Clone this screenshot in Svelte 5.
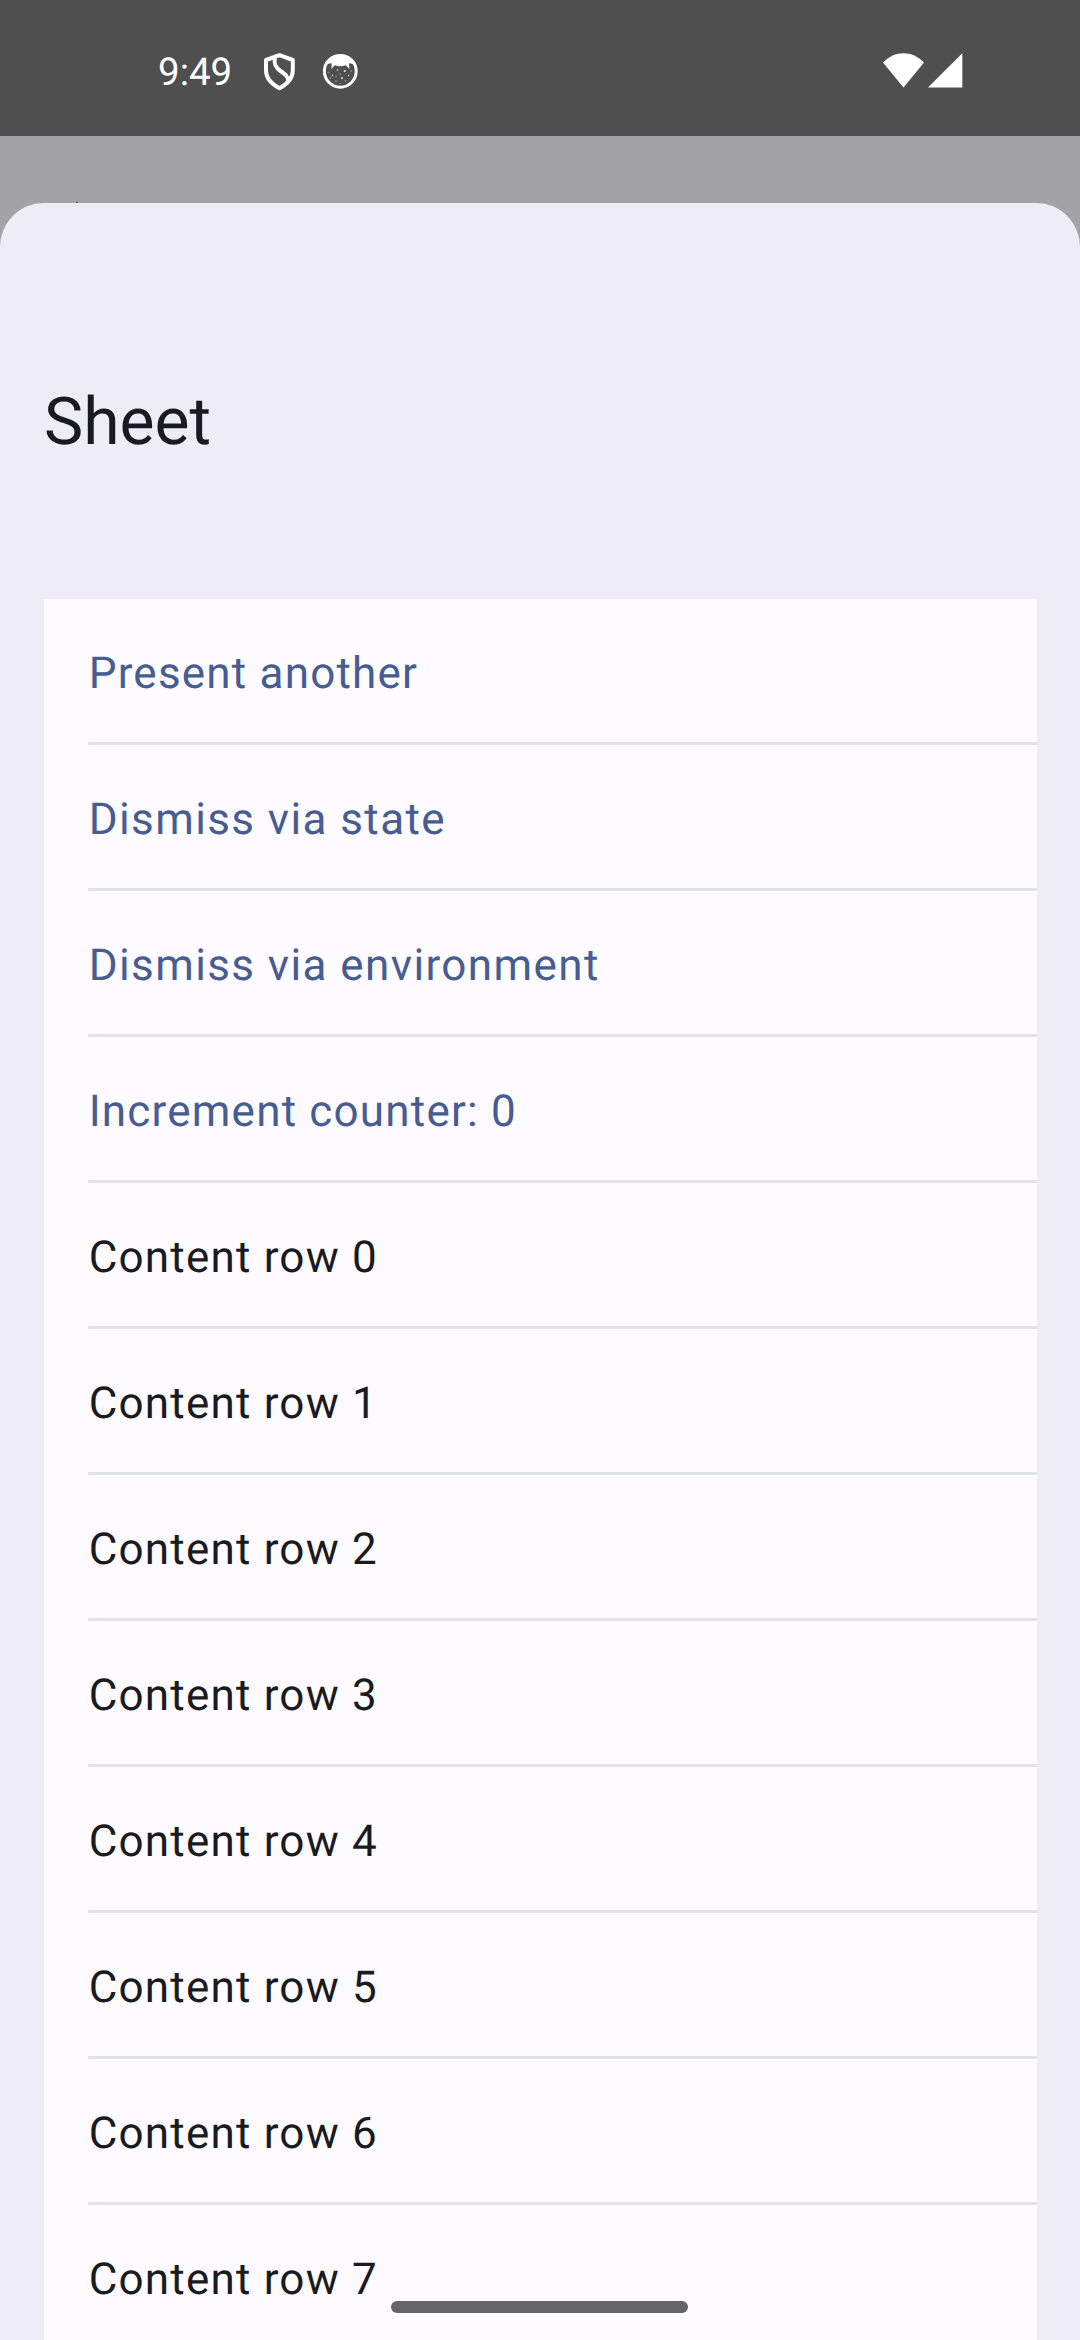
<script>
  const actions = [
    { label: 'Present another', wide: false },
    { label: 'Dismiss via state', wide: true },
    { label: 'Dismiss via environment', wide: true },
    { label: 'Increment counter: 0', wide: false },
  ];
  const rows = Array.from({ length: 8 }, (_, i) => `Content row ${i}`);
</script>

<div class="screen">
  <header class="status">
    <div class="left">
      <span class="time">9:49</span>
      <svg class="shield" width="32" height="38" viewBox="0 0 32 38" fill="none" stroke="#fff" stroke-width="4" stroke-linejoin="round">
        <path d="M15.500 2.200 28.800 7V17.500C28.800 25.500 22.500 31.500 15.500 35.300 8.500 31.500 2 25.500 2 17.500V7Z" />
        <path d="M10.800 4.500C9.800 11 11.500 14.500 16.500 18 21.500 21.500 24.300 23.500 24.300 28.500" />
      </svg>
      <svg class="cat" width="36" height="36" viewBox="0 0 36 36">
        <circle cx="18.300" cy="18.300" r="15.900" fill="none" stroke="#fff" stroke-width="3" />
        <path d="M5 11 8 6.500C13 1 23.500 1 28.500 6.500L31.600 11 27 10.300 27.400 16 23.800 12.200Q18.300 14.500 12.800 12.200L9.400 16 9.700 10.300Z" fill="#fff" />
        <g fill="#fff" opacity=".85">
          <circle cx="15.500" cy="17" r=".8" /><circle cx="22.800" cy="18" r="1.100" />
          <circle cx="10.500" cy="22.500" r=".8" /><circle cx="20" cy="25" r="1" />
          <circle cx="26.500" cy="22.500" r=".7" />
        </g>
        <g fill="#fff" opacity=".35">
          <circle cx="6.500" cy="19.500" r=".9" /><circle cx="8.500" cy="25" r=".9" />
          <circle cx="14" cy="28" r=".9" /><circle cx="18" cy="21" r=".9" />
          <circle cx="23.500" cy="28" r=".9" /><circle cx="29" cy="18" r=".9" />
          <circle cx="14" cy="23.500" r=".8" /><circle cx="18" cy="30.500" r=".8" />
        </g>
      </svg>
    </div>
    <div class="right">
      <svg width="41" height="35" viewBox="0 0 41 35"><path d="M0 9.500C11.500-3 29.500-3 41 9.500L20.500 34.500Z" fill="#fff" /></svg>
      <svg width="35" height="35" viewBox="0 0 35 35"><path d="M0 34.500 34.300.3V34.500Z" fill="#fff" /></svg>
    </div>
  </header>
  <div class="backdrop"><i class="speck"></i></div>
  <main class="sheet">
    <h1>Sheet</h1>
    <ul>
      {#each actions as { label, wide }}
        <li class:wide><button>{label}</button></li>
      {/each}
      {#each rows as label}
        <li><span>{label}</span></li>
      {/each}
    </ul>
  </main>
  <div class="home"></div>
</div>

<style>
  :global(body) { margin: 0; }
  .screen {
    position: relative;
    display: flex;
    flex-direction: column;
    width: 1080px;
    height: 2340px;
    overflow: hidden;
    background: #a3a2a7;
    font-family: Roboto, sans-serif;
    text-rendering: geometricPrecision;
    color: #1a1b20;
  }
  .status {
    flex: none;
    box-sizing: border-box;
    display: flex;
    justify-content: space-between;
    height: 136px;
    padding: 53px 117px 0 158px;
    background: #4f4f4f;
  }
  .left, .right { display: flex; align-items: flex-start; }
  .right { gap: 4px; }
  .time {
    width: 106px;
    padding-top: 1px;
    font-size: 38.5px;
    line-height: 38px;
    color: #fff;
    white-space: nowrap;
  }
  .cat { margin-left: 26px; }
  svg { display: block; }
  .backdrop {
    flex: none;
    display: flex;
    align-items: flex-end;
    height: 67px;
    padding-left: 76px;
  }
  .speck { width: 2px; height: 1px; background: #55555a; }
  .sheet {
    flex: 1;
    min-height: 0;
    overflow: hidden;
    padding: 0 43px 0 44px;
    border-radius: 44px 44px 0 0;
    background: #eeedf6;
  }
  h1 {
    margin: 0;
    padding-top: 176px;
    height: 220px;
    font-size: 66px;
    font-weight: 400;
    line-height: 88px;
  }
  ul {
    margin: 0;
    padding: 0 0 0 44px;
    list-style: none;
    background: #fdfbff;
  }
  li {
    box-sizing: border-box;
    display: flex;
    align-items: center;
    height: 146px;
    padding: 5px 0 0 0.7px;
    border-bottom: 3px solid #e1e2ec;
    font-size: 44px;
    letter-spacing: 1.2px;
  }
  li.wide { letter-spacing: 1.4px; }
  button {
    padding: 0;
    border: 0;
    background: none;
    font: inherit;
    letter-spacing: inherit;
    text-rendering: inherit;
    color: #475d92;
  }
  .home {
    position: absolute;
    left: 391px;
    top: 2301px;
    width: 297px;
    height: 12px;
    border-radius: 6px;
    background: #656467;
  }
</style>
